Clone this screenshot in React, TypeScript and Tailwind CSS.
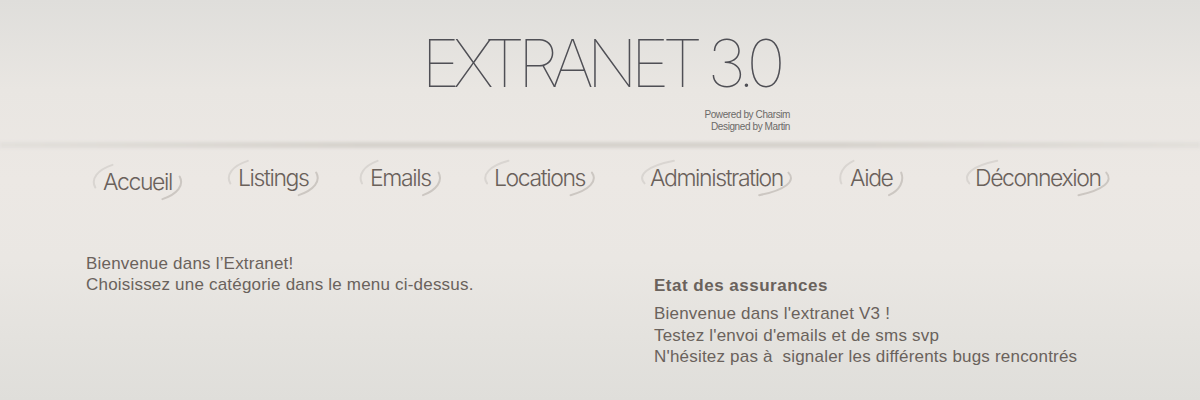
const navItems = [
  { label: "Accueil", width: "w-[135px]", drop: true },
  { label: "Listings", width: "w-[132px]" },
  { label: "Emails", width: "w-[124px]" },
  { label: "Locations", width: "w-[156px]" },
  { label: "Administration", width: "w-[200px]" },
  { label: "Aide", width: "w-[125px]" },
  { label: "Déconnexion", width: "w-[140px]" },
];

function NavArc() {
  return (
    <svg
      className="pointer-events-none absolute -left-[11px] -right-[11px] -top-[8px] -bottom-[8px] h-[calc(100%+16px)] w-[calc(100%+22px)]"
      viewBox="0 0 100 40"
      preserveAspectRatio="none"
      aria-hidden
    >
      <path
        d="M 3.6 24.9 A 48 19 0 0 1 22.5 4.4"
        fill="none"
        stroke="#d9d5d1"
        strokeWidth="2"
        strokeLinecap="round"
        vectorEffect="non-scaling-stroke"
      />
      <path
        d="M 96.4 15.1 A 48 19 0 0 1 77.5 35.6"
        fill="none"
        stroke="#ccc7c2"
        strokeWidth="2"
        strokeLinecap="round"
        vectorEffect="non-scaling-stroke"
      />
    </svg>
  );
}

export default function App() {
  return (
    <div className="min-h-[400px] w-full bg-[linear-gradient(to_bottom,#dfdedb_0px,#e9e6e2_90px,#ece8e4_180px,#eae7e3_260px,#dfdeda_400px)] font-['Liberation_Sans',Arial,sans-serif] text-[#6a625c]">
      <header className="flex flex-col items-center pt-[27px]">
        <h1 className="font-['Inter',sans-serif] text-[66px] font-thin leading-[72px] tracking-[-7px] text-[#4f4f55]">
          EXTRANET 3.0
        </h1>
        <div className="mt-[10px] w-[380px] text-right text-[10px] leading-[12px] tracking-[-0.4px] text-[#6c6a68]">
          <p>Powered by Charsim</p>
          <p>Designed by Martin</p>
        </div>
      </header>

      <div className="mt-[9px] h-[6px] w-full bg-[linear-gradient(to_right,#e2dfdb,#d6d2cd_30%,#d6d2cd_70%,#e2dfdb)] blur-[1.5px]" />

      <nav className="mt-[16px] flex pl-[103px] font-['Inter',sans-serif] text-[23px] font-light leading-[28px] tracking-[-1.4px] text-[#6a615b]">
        {navItems.map((item) => (
          <div key={item.label} className={`${item.width} shrink-0`}>
            <span className={`relative inline-block ${item.drop ? "mt-[4px]" : ""}`}>
              <NavArc />
              {item.label}
            </span>
          </div>
        ))}
      </nav>

      <main className="mt-[57px] flex pl-[86px] text-[17px] leading-[21px] tracking-[0.2px]">
        <div className="w-[568px] shrink-0">
          <p>Bienvenue dans l’Extranet!</p>
          <p>Choisissez une catégorie dans le menu ci-dessus.</p>
        </div>
        <div className="pt-[22px]">
          <h2 className="text-[17px] font-bold leading-[21px] tracking-[0.5px]">Etat des assurances</h2>
          <div className="mt-[7px] leading-[21.5px]">
            <p>Bienvenue dans l'extranet V3 !</p>
            <p>Testez l'envoi d'emails et de sms svp</p>
            <p>N'hésitez pas à&nbsp; signaler les différents bugs rencontrés</p>
          </div>
        </div>
      </main>
    </div>
  );
}
